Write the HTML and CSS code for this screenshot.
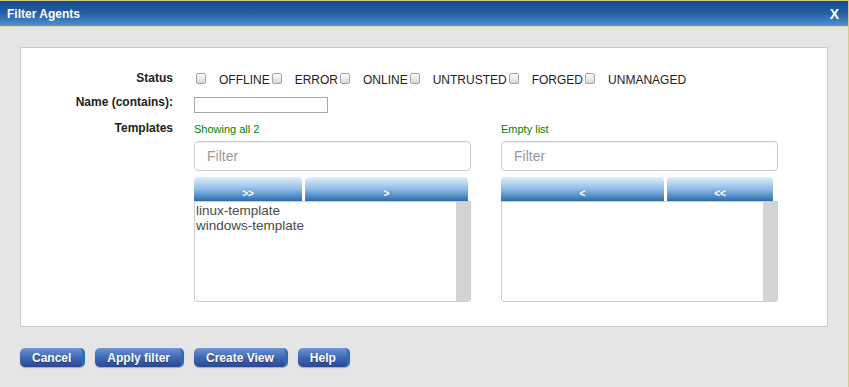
FILE: index.html
```html
<!DOCTYPE html>
<html>
<head>
  <link rel="stylesheet" href="styles.css">
  <title>Filter Agents</title>
</head>
<body>
  <div class="dialog">
    <div class="titlebar">
      <span class="title">Filter Agents</span>
      <span class="close">X</span>
    </div>
    <div class="dialog-body">
      <div class="panel">
        <div class="row row-status">
          <div class="row-label">Status</div>
          <div class="status-list">
            <input type="checkbox" id="st-offline"><label for="st-offline">OFFLINE</label>
            <input type="checkbox" id="st-error"><label for="st-error">ERROR</label>
            <input type="checkbox" id="st-online"><label for="st-online">ONLINE</label>
            <input type="checkbox" id="st-untrusted"><label for="st-untrusted">UNTRUSTED</label>
            <input type="checkbox" id="st-forged"><label for="st-forged">FORGED</label>
            <input type="checkbox" id="st-unmanaged"><label for="st-unmanaged">UNMANAGED</label>
          </div>
        </div>

        <div class="row row-name">
          <label class="row-label" for="name">Name (contains):</label>
          <div><input type="text" id="name" class="name-input"></div>
        </div>

        <div class="row row-templates">
          <div class="row-label">Templates</div>
          <div class="dual">
            <div class="box">
              <div class="info">Showing all 2</div>
              <input type="text" class="filter" placeholder="Filter">
              <div class="moves">
                <button class="move move-wide-l">&gt;&gt;</button>
                <button class="move move-main">&gt;</button>
              </div>
              <div class="list">
                <div class="items">
                  <div>linux-template</div>
                  <div>windows-template</div>
                </div>
                <div class="scroll"></div>
              </div>
            </div>
            <div class="box">
              <div class="info">Empty list</div>
              <input type="text" class="filter" placeholder="Filter">
              <div class="moves">
                <button class="move move-main">&lt;</button>
                <button class="move move-wide-r">&lt;&lt;</button>
              </div>
              <div class="list">
                <div class="items"></div>
                <div class="scroll"></div>
              </div>
            </div>
          </div>
        </div>
      </div>

      <div class="actions">
        <button class="btn">Cancel</button>
        <button class="btn">Apply filter</button>
        <button class="btn">Create View</button>
        <button class="btn">Help</button>
      </div>
    </div>
  </div>
</body>
</html>
```

FILE: styles.css
```css
body {
  margin: 0;
  font-family: "Liberation Sans", Arial, sans-serif;
  font-size: 12px;
  background-color: #e5e5e5;
  color: #222;
}
.dialog {
  width: 849px;
  height: 387px;
  box-sizing: border-box;
  border-right: 1px solid #d4ca8c;
  overflow: hidden;
}
.titlebar {
  height: 25px;
  border-top: 1px solid #d4ca8c;
  border-bottom: 1px solid #d8d4b4;
  background: linear-gradient(#144a8e, #2560a4 50%, #4f93d2);
  color: #fff;
  display: flex;
  align-items: center;
  justify-content: space-between;
  padding: 0 9px 0 7px;
}
.title {
  font-weight: bold;
  font-size: 12px;
}
.close {
  font-weight: bold;
  font-size: 14px;
}
.dialog-body {
  padding: 20px 20px 0 20px;
}
.panel {
  background-color: #fff;
  border: 1px solid #c9c9c9;
  padding: 23px 0 24px 0;
}
.row {
  display: grid;
  grid-template-columns: 152px 1fr;
  column-gap: 21px;
}
.row-label {
  text-align: right;
  font-weight: bold;
  line-height: 14px;
  color: #222;
}
.status-list {
  display: flex;
  align-items: center;
  height: 14px;
  color: #222;
}
.status-list input {
  appearance: none;
  -webkit-appearance: none;
  width: 10px;
  height: 11px;
  margin: 0 0 0 2px;
  border: 1px solid #a4a4a4;
  border-radius: 2px;
  background: linear-gradient(#fdfdfd, #d8d8d8);
  box-sizing: border-box;
}
.status-list label {
  margin-left: 13px;
  line-height: 14px;
  padding-top: 4px;
}
.row-name {
  margin-top: 10px;
}
.name-input {
  width: 134px;
  height: 16px;
  box-sizing: border-box;
  margin: 2px 0 0 0;
  border: 1px solid #a8a8a8;
  padding: 0;
}
.row-templates {
  margin-top: 8px;
}
.dual {
  display: flex;
  gap: 30px;
}
.box {
  width: 277px;
}
.info {
  color: #008000;
  font-size: 11px;
  line-height: 14px;
  padding-top: 1px;
}
.filter {
  display: block;
  width: 100%;
  height: 30px;
  box-sizing: border-box;
  margin-top: 5px;
  border: 1px solid #ccc;
  border-radius: 4px;
  padding: 0 12px;
  font-family: "Liberation Sans", Arial, sans-serif;
  font-size: 14px;
  box-shadow: inset 0 1px 1px rgba(0, 0, 0, 0.06);
}
.filter::placeholder {
  color: #999;
}
.moves {
  display: flex;
  gap: 3px;
  margin-top: 6px;
}
.move {
  height: 24px;
  border: none;
  border-radius: 4px 4px 0 0;
  background: linear-gradient(#def0fc, #8fbde6 50%, #2b6cae);
  color: #fff;
  font-family: "Liberation Sans", Arial, sans-serif;
  font-size: 10px;
  font-weight: bold;
  padding: 9px 0 0 0;
}
.move-wide-l {
  width: 108px;
}
.move-wide-r {
  width: 106px;
}
.move-main {
  width: 163px;
}
.list {
  display: flex;
  height: 101px;
  box-sizing: border-box;
  border: 1px solid #cccccc;
  border-radius: 0 0 3px 3px;
}
.items {
  flex: 1;
  padding: 1px 0 0 1px;
  font-size: 13.5px;
  line-height: 15px;
  color: #4a4a4a;
}
.scroll {
  width: 14px;
  background-color: #d4d4d4;
}
.actions {
  display: flex;
  gap: 10px;
  margin-top: 21px;
}
.btn {
  height: 19px;
  padding: 0 11px 0 12px;
  border: none;
  border-right: 3px solid #2a70b4;
  border-radius: 5px;
  background: linear-gradient(#6e95d3, #4168b4 50%, #2a4896);
  color: #fff;
  font-family: "Liberation Sans", Arial, sans-serif;
  font-size: 12px;
  font-weight: bold;
  text-shadow: 0 1px 1px rgba(0, 0, 0, 0.4);
  box-shadow: 0 1px 1px rgba(0, 0, 0, 0.25);
}
```
